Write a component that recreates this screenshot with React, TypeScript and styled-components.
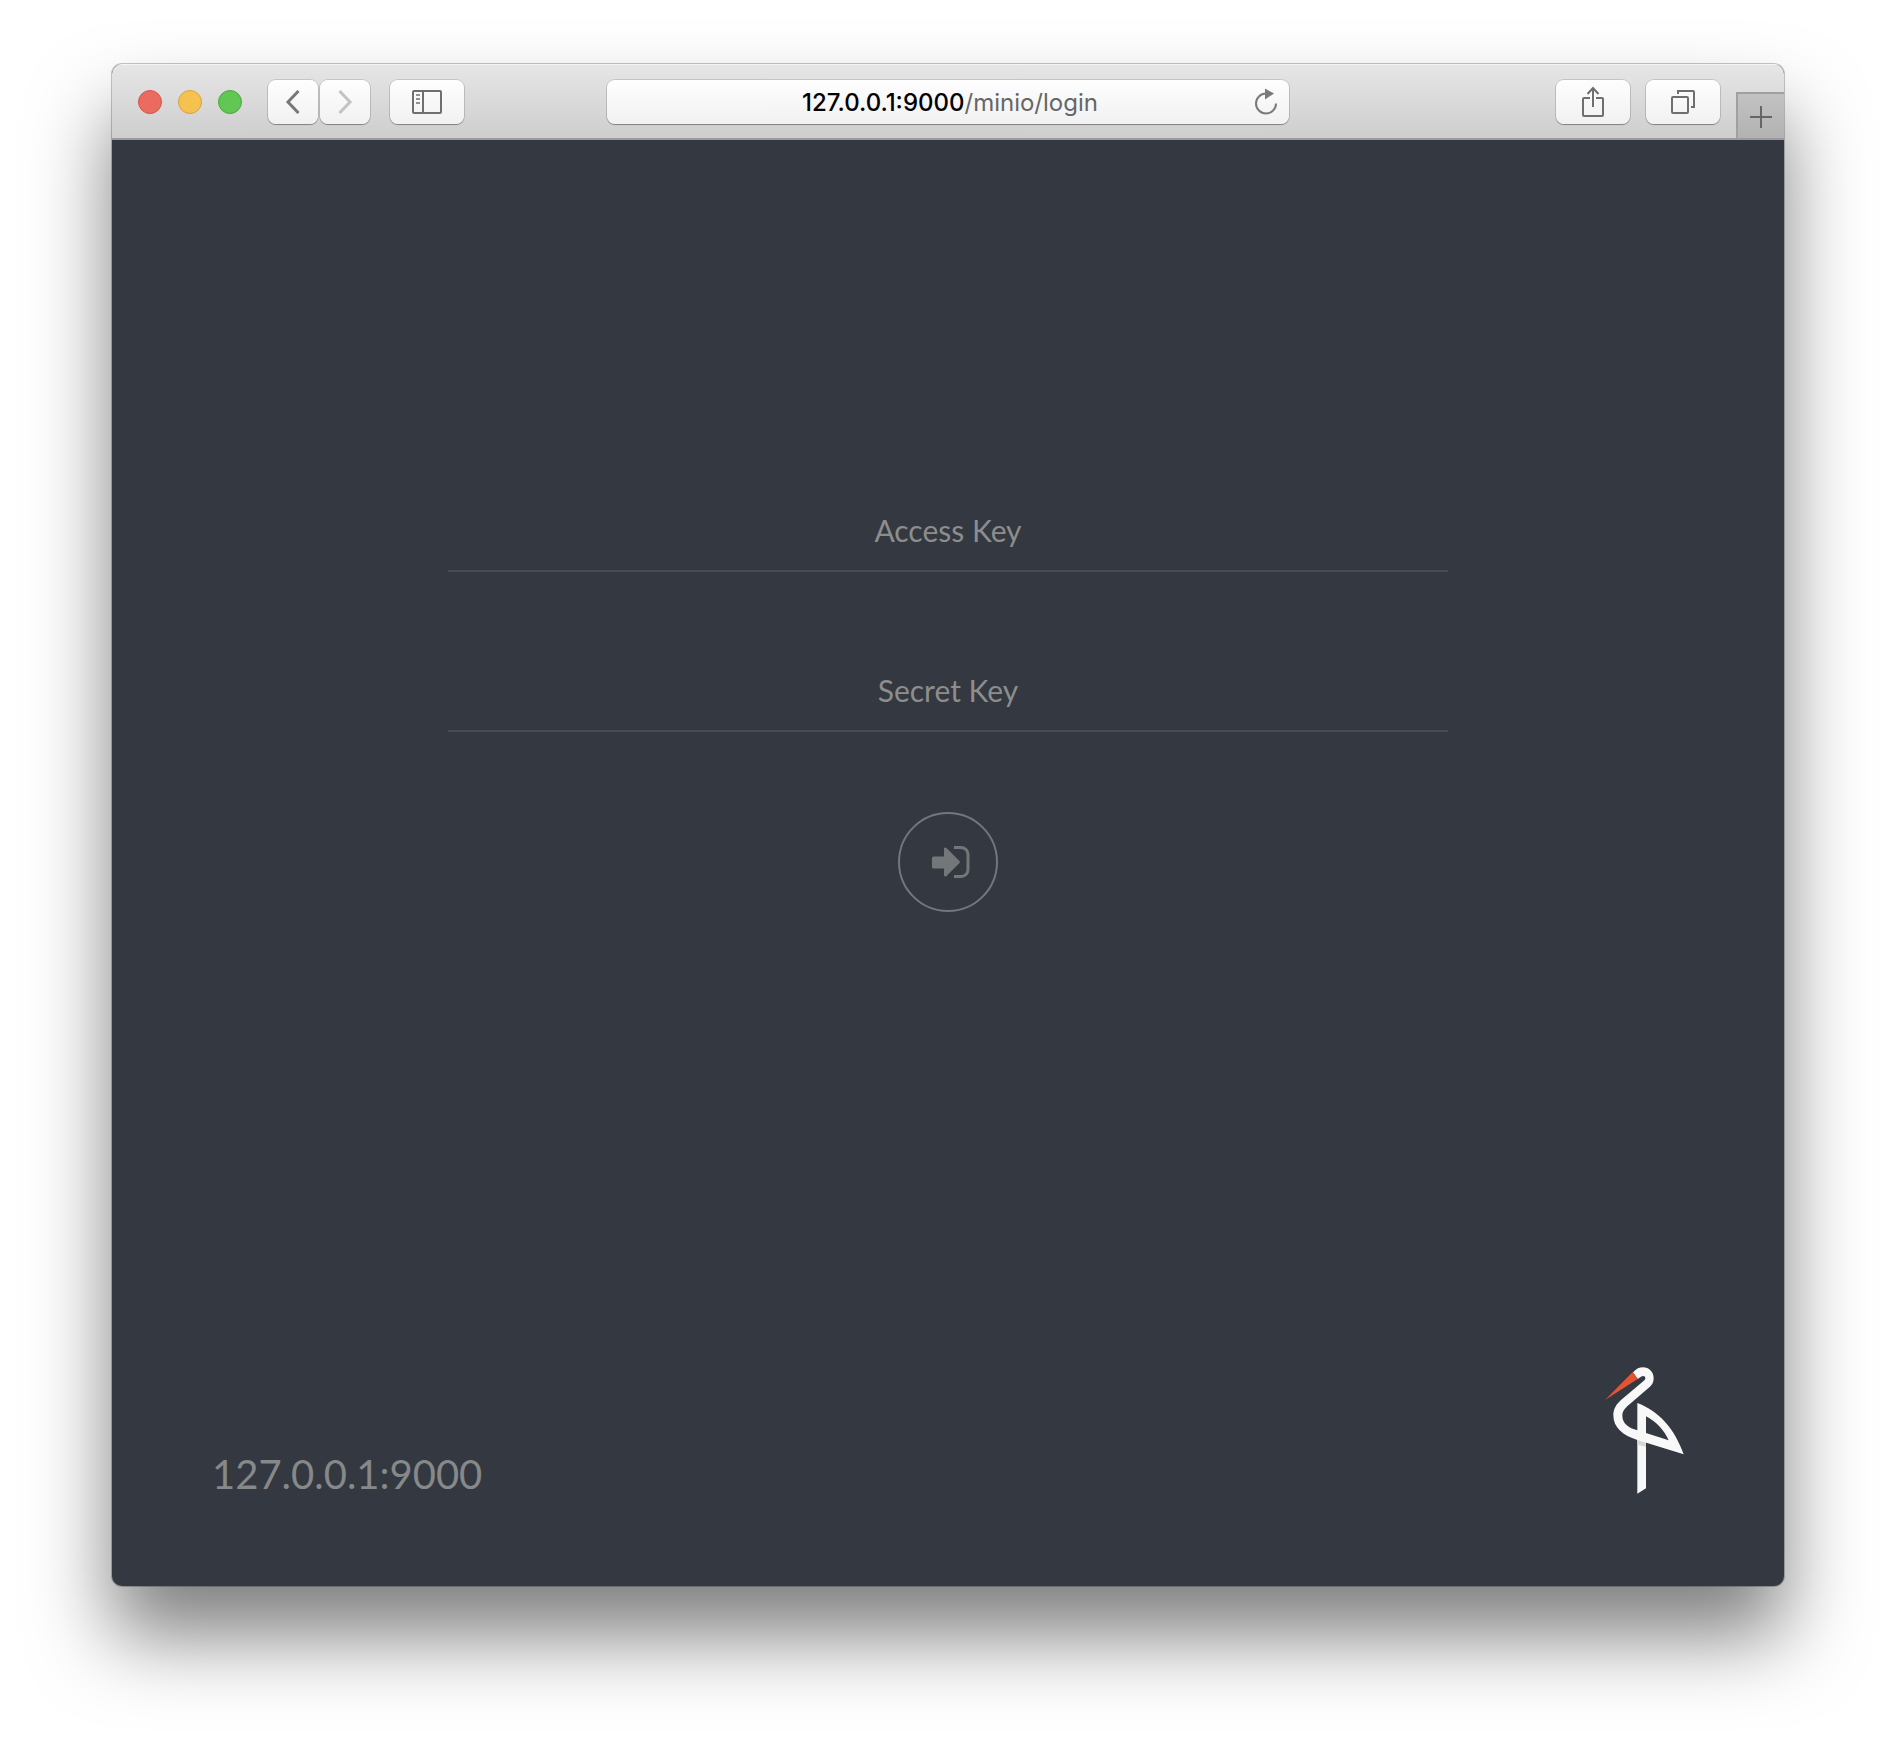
import React from "react";
import styled, { createGlobalStyle, css } from "styled-components";

const GlobalStyle = createGlobalStyle`
  *, *::before, *::after { box-sizing: border-box; }
  body { margin: 0; background: #ffffff; }
  button, input { font: inherit; margin: 0; padding: 0; border: 0; background: none; color: inherit; }
  svg { display: block; }
`;

const Desktop = styled.div`
  display: flex;
  min-height: 100vh;
  padding: 64px 112px 160px;
`;

const BrowserWindow = styled.div`
  display: flex;
  flex: 1;
  flex-direction: column;
  min-width: 0;
  overflow: hidden;
  border-radius: 10px;
  background: #343840;
  box-shadow: 0 0 0 1px rgba(0, 0, 0, 0.22), 0 50px 80px rgba(0, 0, 0, 0.5);
`;

const Toolbar = styled.header`
  display: grid;
  grid-template-columns: 1fr minmax(0, 682px) 1fr;
  align-items: center;
  height: 76px;
  padding-top: 2px;
  border-bottom: 2px solid #9b9b9b;
  background: linear-gradient(#e6e6e6, #cecece);
  box-shadow: inset 0 1px 0 #f4f4f4;
  font-family: Inter, "Liberation Sans", sans-serif;
`;

const LeftTools = styled.div`
  display: flex;
  align-items: center;
  gap: 20px;
  padding-left: 26px;
`;

const TrafficLights = styled.div`
  display: flex;
  gap: 16px;
  margin-right: 6px;
`;

const Light = styled.button<{ $fill: string; $edge: string }>`
  width: 24px;
  height: 24px;
  border: 1px solid ${(p) => p.$edge};
  border-radius: 50%;
  background: ${(p) => p.$fill};
`;

const Navigation = styled.nav`
  display: flex;
  gap: 2px;
`;

const raised = css`
  border-radius: 8px;
  background: linear-gradient(#fefefe, #f1f1f1);
  box-shadow: 0 0 0 1px rgba(0, 0, 0, 0.12), 0 1px 1px rgba(0, 0, 0, 0.3);
`;

const ToolButton = styled.button<{ $narrow?: boolean }>`
  ${raised}
  display: grid;
  place-items: center;
  width: ${(p) => (p.$narrow ? 50 : 74)}px;
  height: 44px;
`;

const AddressBar = styled.div`
  ${raised}
  display: grid;
  grid-template-columns: 50px 1fr 46px;
  align-items: center;
  height: 44px;
`;

const Address = styled.button`
  grid-column: 2;
  padding-top: 2px;
  color: #666666;
  font-size: 24px;
  line-height: 32px;
  white-space: nowrap;
`;

const Host = styled.span`
  color: #000000;
  font-weight: 500;
`;

const ReloadButton = styled.button`
  display: grid;
  place-items: center;
  height: 44px;
`;

const RightTools = styled.div`
  display: flex;
  align-items: center;
  justify-content: flex-end;
  align-self: stretch;
  gap: 16px;
`;

const NewTabButton = styled.button`
  display: grid;
  place-items: center;
  align-self: flex-end;
  width: 48px;
  height: 46px;
  padding-top: 2px;
  border-top: 2px solid #a0a0a0;
  border-left: 2px solid #a0a0a0;
  background: linear-gradient(#c2c2c2, #b2b2b2);
`;

const Page = styled.main`
  display: flex;
  flex: 1;
  flex-direction: column;
  justify-content: space-between;
  padding: 362px 100px 92px;
  font-family: Lato, "Liberation Sans", sans-serif;
`;

const LoginForm = styled.form`
  display: flex;
  flex-direction: column;
  align-items: center;
  gap: 80px;
`;

const Fields = styled.div`
  display: grid;
  gap: 90px;
  width: 100%;
  max-width: 1000px;
`;

const KeyInput = styled.input`
  width: 100%;
  height: 70px;
  padding-bottom: 12px;
  border-bottom: 2px solid #494c4e;
  border-radius: 0;
  outline: none;
  color: #c8c9ca;
  font-size: 30px;
  text-align: center;

  &::placeholder {
    color: #8c8d8d;
    opacity: 1;
  }
`;

const SubmitButton = styled.button`
  display: grid;
  place-items: center;
  width: 100px;
  height: 100px;
  padding-left: 6px;
  border: 2px solid #73777a;
  border-radius: 50%;
`;

const PageFooter = styled.footer`
  display: flex;
  align-items: flex-end;
  justify-content: space-between;
`;

const ServerName = styled.div`
  color: #868889;
  font-size: 40px;
  line-height: 40px;
`;

const BackIcon = () => (
  <svg width="16" height="24" viewBox="0 0 16 24" fill="none" stroke="#777777" strokeWidth="3">
    <path d="M13.5 1 3 12l10.500 11" />
  </svg>
);

const ForwardIcon = () => (
  <svg width="16" height="24" viewBox="0 0 16 24" fill="none" stroke="#c3c3c3" strokeWidth="3">
    <path d="M2.500 1 13 12 2.500 23" />
  </svg>
);

const SidebarIcon = () => (
  <svg width="30" height="24" viewBox="0 0 30 24" fill="none" stroke="#6f6f6f" strokeWidth="2">
    <rect x="1" y="1" width="28" height="22" rx="1" />
    <path d="M11 1v22" />
    <path d="M4 5h4M4 9h4M4 13h4" stroke="#929292" />
  </svg>
);

const ReloadIcon = () => (
  <svg width="24" height="28" viewBox="0 0 24 28">
    <path d="M12 5.500a10 10 0 1 0 10 10" fill="none" stroke="#7a7a7a" strokeWidth="2" />
    <path d="M11 0.500v11l9-6z" fill="#7a7a7a" />
  </svg>
);

const ShareIcon = () => (
  <svg width="24" height="32" viewBox="0 0 24 32" fill="none" stroke="#6f6f6f" strokeWidth="2">
    <path d="M9 12H3a1 1 0 0 0-1 1v16a1 1 0 0 0 1 1h18a1 1 0 0 0 1-1V13a1 1 0 0 0-1-1h-6" />
    <path d="M12 21V2M6.500 8 12 2l5.500 6" />
  </svg>
);

const TabsIcon = () => (
  <svg width="24" height="24" viewBox="0 0 24 24" fill="none" stroke="#6f6f6f" strokeWidth="2">
    <rect x="1" y="7" width="16" height="16" rx="1" />
    <path d="M7 4V1h15a1 1 0 0 1 1 1v15h-3" />
  </svg>
);

const PlusIcon = () => (
  <svg width="22" height="22" viewBox="0 0 22 22" stroke="#666666" strokeWidth="2">
    <path d="M11 0v22M0 11h22" />
  </svg>
);

const SignInIcon = () => (
  <svg width="46" height="34" viewBox="0 0 46 34">
    <path
      d="M5.500 11.500H16V4c0-1.500 1.500-1.900 2.500-.9l13 12.900q1 1 0 2l-13 12.900c-1 1-2.500.6-2.500-.9v-6.500H5.500Q4 23.500 4 22v-9q0-1.500 1.500-1.500Z"
      fill="#73777a"
    />
    <path d="M26 2.500h7a7 7 0 0 1 7 7v15a7 7 0 0 1-7 7h-7" fill="none" stroke="#73777a" strokeWidth="3" />
  </svg>
);

const StorkLogo = () => (
  <svg width="79" height="127" viewBox="44 49 237 381" role="img" aria-label="Minio">
    <path d="M141 264l26 9v140l-26 16z" fill="#f8f8f8" />
    <path d="M141 266l26 8v15l-26-7z" fill="#dad8d6" />
    <path
      fillRule="evenodd"
      fill="#f8f8f8"
      d="M128 65C138 54 148 50 158 50c18 0 32 14 32 33 0 12-5 20-13 27l-61 52c-13 11-20 20-20 33 0 24 19 36 45 44v-82c64 24 112 76 139 154l-139-43c-43-13-72-37-72-74 0-21 11-35 23-46l65-55c5-4 8-6 8-11 0-6-7-8-13-4l-10 7zM167 197v50l68 22c-12-29-36-55-68-72z"
    />
    <path d="M127 64l15 21-98 63z" fill="#e25433" />
  </svg>
);

export default function App() {
  return (
    <>
      <GlobalStyle />
      <Desktop>
        <BrowserWindow>
          <Toolbar>
            <LeftTools>
              <TrafficLights>
                <Light aria-label="Close" $fill="#ec6b60" $edge="#d5544a" />
                <Light aria-label="Minimize" $fill="#f5c250" $edge="#d9a141" />
                <Light aria-label="Zoom" $fill="#62c655" $edge="#4aa93c" />
              </TrafficLights>
              <Navigation aria-label="History">
                <ToolButton $narrow aria-label="Back"><BackIcon /></ToolButton>
                <ToolButton $narrow aria-label="Forward"><ForwardIcon /></ToolButton>
              </Navigation>
              <ToolButton aria-label="Show sidebar"><SidebarIcon /></ToolButton>
            </LeftTools>
            <AddressBar>
              <Address><Host>127.0.0.1:9000</Host>/minio/login</Address>
              <ReloadButton aria-label="Reload"><ReloadIcon /></ReloadButton>
            </AddressBar>
            <RightTools>
              <ToolButton aria-label="Share"><ShareIcon /></ToolButton>
              <ToolButton aria-label="Show all tabs"><TabsIcon /></ToolButton>
              <NewTabButton aria-label="New tab"><PlusIcon /></NewTabButton>
            </RightTools>
          </Toolbar>
          <Page>
            <LoginForm onSubmit={(event) => event.preventDefault()}>
              <Fields>
                <KeyInput type="text" name="accessKey" placeholder="Access Key" aria-label="Access Key" />
                <KeyInput type="password" name="secretKey" placeholder="Secret Key" aria-label="Secret Key" />
              </Fields>
              <SubmitButton type="submit" aria-label="Sign in"><SignInIcon /></SubmitButton>
            </LoginForm>
            <PageFooter>
              <ServerName>127.0.0.1:9000</ServerName>
              <StorkLogo />
            </PageFooter>
          </Page>
        </BrowserWindow>
      </Desktop>
    </>
  );
}
